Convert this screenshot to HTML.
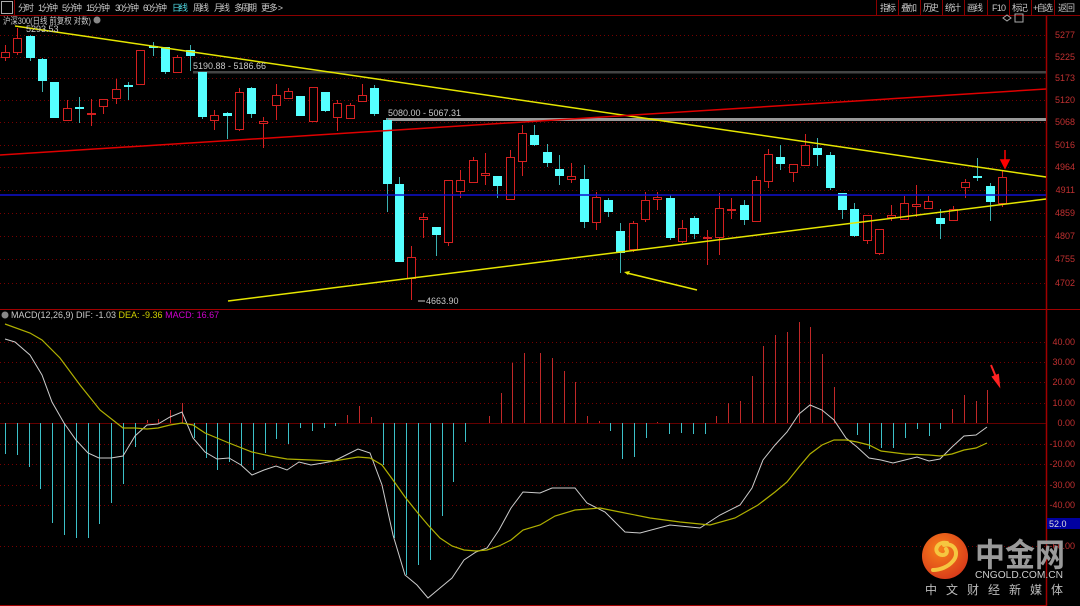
<!DOCTYPE html>
<html><head><meta charset="utf-8"><style>
body{margin:0;background:#000;width:1080px;height:606px;overflow:hidden;font-family:"Liberation Sans","Noto Sans CJK SC",sans-serif}
svg{position:absolute;left:0;top:0}
</style></head><body>
<svg id="s" width="1080" height="606" xmlns="http://www.w3.org/2000/svg" font-family="Liberation Sans, Noto Sans CJK SC, sans-serif">
<rect width="1080" height="606" fill="#000"/>
<!-- top bar -->
<line x1="0" y1="15.5" x2="1080" y2="15.5" stroke="#8b0000"/>
<rect x="1.5" y="1.5" width="11" height="12" fill="none" stroke="#aaa"/>
<line x1="14.5" y1="0" x2="14.5" y2="15" stroke="#8b0000"/>
<g font-size="9" fill="#c8c8c8" lengthAdjust="spacingAndGlyphs">
<text x="18" y="11" textLength="16">分时</text><text x="38" y="11" textLength="20">1分钟</text><text x="62" y="11" textLength="20">5分钟</text><text x="86" y="11" textLength="24">15分钟</text><text x="115" y="11" textLength="24">30分钟</text><text x="143" y="11" textLength="24">60分钟</text>
<text x="172" y="11" fill="#4fd6e0" textLength="16">日线</text><text x="193" y="11" textLength="16">周线</text><text x="214" y="11" textLength="16">月线</text><text x="234" y="11" textLength="23">多周期</text><text x="261" y="11" textLength="22">更多 &gt;</text>
<text x="880" y="11" textLength="16">指标</text><text x="901" y="11" textLength="16">叠加</text><text x="923" y="11" textLength="16">历史</text><text x="945" y="11" textLength="16">统计</text><text x="967" y="11" textLength="16">画线</text><text x="992" y="11" textLength="14">F10</text><text x="1012" y="11" textLength="16">标记</text><text x="1033" y="11" textLength="20">+自选</text><text x="1058" y="11" textLength="17">返回</text>
</g>
<g stroke="#8b0000"><line x1="876.5" y1="0" x2="876.5" y2="15"/><line x1="898.5" y1="0" x2="898.5" y2="15"/><line x1="920.5" y1="0" x2="920.5" y2="15"/><line x1="942.5" y1="0" x2="942.5" y2="15"/><line x1="964.5" y1="0" x2="964.5" y2="15"/><line x1="987.5" y1="0" x2="987.5" y2="15"/><line x1="1009.5" y1="0" x2="1009.5" y2="15"/><line x1="1031.5" y1="0" x2="1031.5" y2="15"/><line x1="1054.5" y1="0" x2="1054.5" y2="15"/></g>
<!-- axes -->
<line x1="1046.5" y1="16" x2="1046.5" y2="606" stroke="#a00000" stroke-width="1.5"/>
<line x1="0" y1="309.5" x2="1080" y2="309.5" stroke="#a00000"/>
<line x1="0" y1="605.5" x2="1046" y2="605.5" stroke="#a00000"/>
<g id="grid" stroke="#700" stroke-dasharray="1,3"></g>
<g font-size="9" fill="#c03030" text-anchor="end" id="lbl"></g>
<text x="3" y="24" font-size="9" fill="#c8c8c8" textLength="88" lengthAdjust="spacingAndGlyphs">沪深300(日线 前复权 对数)</text>
<circle cx="97" cy="20" r="3.5" fill="#888"/>
<path d="M1003 18l4-3 4 3-4 3z" fill="none" stroke="#aaa"/><rect x="1015" y="14" width="8" height="8" fill="none" stroke="#aaa"/>
<!-- grey bars -->
<rect x="193" y="71" width="853" height="2.5" fill="#444"/>
<rect x="386" y="118" width="660" height="3" fill="#999"/>
<g id="cd"></g>
<!-- lines -->
<line x1="15" y1="26" x2="1046" y2="177" stroke="#e6e600" stroke-width="1.5"/>
<line x1="0" y1="155" x2="1046" y2="89" stroke="#e00000" stroke-width="1.5"/>
<line x1="0" y1="195" x2="1046" y2="195" stroke="#1010d0" stroke-width="1.5"/>
<line x1="228" y1="301" x2="1046" y2="199" stroke="#e6e600" stroke-width="1.5"/>
<line x1="697" y1="290" x2="627" y2="273" stroke="#e6e600" stroke-width="1.5"/>
<path d="M624 272l6-1-2 4z" fill="#e6e600"/>
<path d="M1005 150v11M1001 160l4 8 4-8z" stroke="#f00" fill="#f00" stroke-width="1.5"/>
<g font-size="9" fill="#c8c8c8">
<text x="26" y="32">5293.53</text><text x="193" y="69">5190.88 - 5186.66</text><text x="388" y="116">5080.00 - 5067.31</text><text x="426" y="304">4663.90</text>
</g>
<line x1="418" y1="301" x2="425" y2="301" stroke="#ccc"/>
<!-- MACD -->
<circle cx="5" cy="315" r="3.5" fill="#888"/>
<text x="11" y="318" font-size="9"><tspan fill="#c8c8c8">MACD(12,26,9)  DIF: -1.03 </tspan><tspan fill="#d0d000">DEA: -9.36 </tspan><tspan fill="#d000d0">MACD: 16.67</tspan></text>
<g id="mb"></g>
<polyline id="dif" fill="none" stroke="#ccc" stroke-width="1"/>
<polyline id="dea" fill="none" stroke="#b0b000" stroke-width="1.2"/>
<path d="M991 365l5 12M993 377l6 8-1-10z" stroke="#f22" fill="#f22" stroke-width="2"/>
<rect x="1047" y="518" width="33" height="11" fill="#0000a0"/><text x="1049" y="527" font-size="9" fill="#ddd">52.0</text>
<!-- logo -->
<defs><radialGradient id="g" cx="0.4" cy="0.35" r="0.7"><stop offset="0" stop-color="#f7801a"/><stop offset="1" stop-color="#d8391a"/></radialGradient></defs>
<circle cx="945" cy="556" r="23" fill="url(#g)"/>
<path d="M947 543c-9-2-14 7-8 11 5 3 10-1 7-5M944 545c10-3 16 8 9 16-5 6-13 9-20 9" fill="none" stroke="#f5c640" stroke-width="4" stroke-linecap="round"/>
<text x="975" y="566" font-size="32" font-weight="bold" fill="#9a9a9a" font-family="Noto Sans CJK SC, sans-serif" textLength="90" lengthAdjust="spacingAndGlyphs">中金网</text>
<text x="975" y="578" font-size="10" fill="#ccc" textLength="88" lengthAdjust="spacingAndGlyphs">CNGOLD.COM.CN</text>
<text x="925" y="594" font-size="12" fill="#bbb" textLength="138" font-family="Noto Sans CJK SC, sans-serif">中文财经新媒体</text>
</svg>
<script>
var NS="http://www.w3.org/2000/svg";
function el(p,t,a){var e=document.createElementNS(NS,t);for(var k in a)e.setAttribute(k,a[k]);document.getElementById(p).appendChild(e);return e;}
var py=[[35,"5277"],[57,"5225"],[78,"5173"],[100,"5120"],[122,"5068"],[145,"5016"],[167,"4964"],[190,"4911"],[213,"4859"],[236,"4807"],[259,"4755"],[283,"4702"],[342,"40.00"],[362,"30.00"],[382,"20.00"],[403,"10.00"],[423,"0.00"],[444,"-10.00"],[464,"-20.00"],[485,"-30.00"],[505,"-40.00"],[546,"-60.00"]];
py.forEach(function(p){el("grid","line",{x1:0,y1:p[0]+.5,x2:1046,y2:p[0]+.5});el("lbl","text",{x:1075,y:p[0]+3}).textContent=p[1];});
el("grid","line",{x1:0,y1:423.5,x2:1046,y2:423.5,"stroke-dasharray":"none",stroke:"#600"});
var C=[[1,52,57,45,61],[1,38,52,28,55],[0,36,57,35,61],[0,59,80,58,92],[0,82,117,82,118],[1,108,120,100,120],[0,107,108,97,123],[1,113,114,99,126],[1,99,106,99,114],[1,89,98,79,104],[0,85,86,82,100],[1,50,84,50,84],[0,46,47,42,56],[0,47,71,47,74],[1,57,72,55,72],[0,50,55,45,71],[0,72,116,72,119],[1,115,120,110,130],[0,113,115,112,139],[1,92,129,88,131],[0,88,113,87,118],[1,121,123,117,148],[1,95,105,84,120],[1,91,98,88,98],[0,96,115,96,116],[1,87,121,87,121],[0,92,110,92,112],[1,103,117,100,131],[1,105,118,103,118],[1,95,101,84,101],[0,88,113,85,116],[0,120,183,118,212],[0,184,261,177,262],[1,257,278,246,300],[1,217,219,213,238],[0,227,234,227,256],[1,180,242,180,246],[1,180,191,170,198],[1,160,182,157,182],[1,173,175,153,185],[0,176,185,176,198],[1,157,199,150,200],[1,133,161,125,176],[0,135,144,125,146],[0,152,162,144,167],[0,169,175,155,185],[1,176,179,163,183],[0,179,221,165,228],[1,197,222,192,230],[0,200,211,198,217],[0,231,252,223,273],[1,223,249,221,252],[1,200,219,192,222],[1,197,199,192,210],[0,198,237,195,240],[1,228,241,220,243],[0,218,233,216,239],[1,237,238,230,265],[1,208,237,193,255],[1,209,210,198,219],[0,205,219,200,225],[1,180,221,176,222],[1,154,181,149,188],[0,157,163,145,170],[1,164,172,164,182],[1,145,165,134,165],[0,148,154,138,166],[0,155,187,152,190],[0,193,209,193,219],[0,209,235,203,237],[1,215,240,215,244],[1,229,253,229,255],[1,215,217,205,221],[1,203,219,196,219],[1,204,206,185,217],[1,201,208,196,208],[0,218,223,209,239],[1,209,220,206,220],[1,182,187,179,198],[0,176,177,158,181],[0,186,201,183,221],[1,177,203,171,207]];
var n=C.length;
C.forEach(function(c,i){var x=Math.round(5+i*(997/(n-1)));var col=c[0]?"#d42020":"#55ffff";
el("cd","line",{x1:x+.5,y1:c[3],x2:x+.5,y2:c[4],stroke:c[0]?"#d42020":"#3bb0b0"});
var h=Math.max(1,c[2]-c[1]);
if(c[0])el("cd","rect",{x:x-3.5,y:c[1]+.5,width:8,height:h,fill:"#000",stroke:col});
else el("cd","rect",{x:x-4,y:c[1],width:9,height:h+1,fill:col});});
var A=[454,455,467,489,523,535,538,538,524,503,484,447,420,419,410,403,438,458,470,462,465,470,453,439,444,428,431,428,426,415,406,417,465,538,575,565,560,516,482,442,423,416,393,363,353];
A.forEach(function(v,i){var x=Math.round(5+i*11.8)+.5;el("mb","line",{x1:x,y1:423,x2:x,y2:v,stroke:v<423?"#c02828":"#3cc0c8"});});
var B=[[540,353],[552,358],[564,371],[575,382],[587,416],[599,421],[610,431],[622,459],[634,457],[646,438],[657,422],[669,434],[681,433],[693,434],[705,434],[716,416],[728,403],[740,401],[752,376],[763,346],[775,335],[787,332],[799,322],[810,327],[822,354],[834,387],[857,435],[869,449],[881,448],[893,448],[905,438],[917,429],[929,436],[940,429],[952,409],[964,395],[976,401],[987,390]];
B.forEach(function(b){el("mb","line",{x1:b[0]+.5,y1:423,x2:b[0]+.5,y2:b[1],stroke:b[1]<423?"#c02828":"#3cc0c8"});});
document.getElementById("dif").setAttribute("points","5,339 15,342 30,355 42,375 52,402 64,423 76,440 88,453 99,458 111,458 123,456 135,436 147,425 158,424 170,417 182,412 193,438 205,452 217,459 229,458 241,465 252,475 264,470 276,466 287,470 299,462 311,465 323,463 334,461 346,455 358,449 370,453 382,485 393,535 405,575 417,585 428,598 440,588 452,578 464,560 476,552 487,548 499,530 511,508 523,492 540,493 552,488 575,488 587,503 605,512 625,532 640,533 670,525 700,528 720,515 740,505 752,488 763,460 775,445 787,432 799,414 810,405 822,410 834,420 846,438 857,447 869,458 881,460 893,463 905,460 917,457 929,461 940,459 952,447 964,436 976,435 987,427");
document.getElementById("dea").setAttribute("points","5,324 30,333 42,340 60,358 80,385 100,410 123,428 135,428 147,429 158,428 170,425 182,423 193,425 205,433 229,443 252,452 270,456 287,459 311,460 334,461 358,457 370,458 382,465 393,480 405,497 417,512 428,525 440,538 452,546 464,550 476,551 487,550 499,546 511,540 523,530 540,525 555,516 575,510 600,508 620,512 650,518 680,522 710,525 735,518 758,505 775,492 787,482 799,467 810,454 822,445 834,440 846,440 857,442 869,445 881,451 905,454 929,455 940,456 952,454 964,450 976,448 987,443");
</script>
</body></html>
